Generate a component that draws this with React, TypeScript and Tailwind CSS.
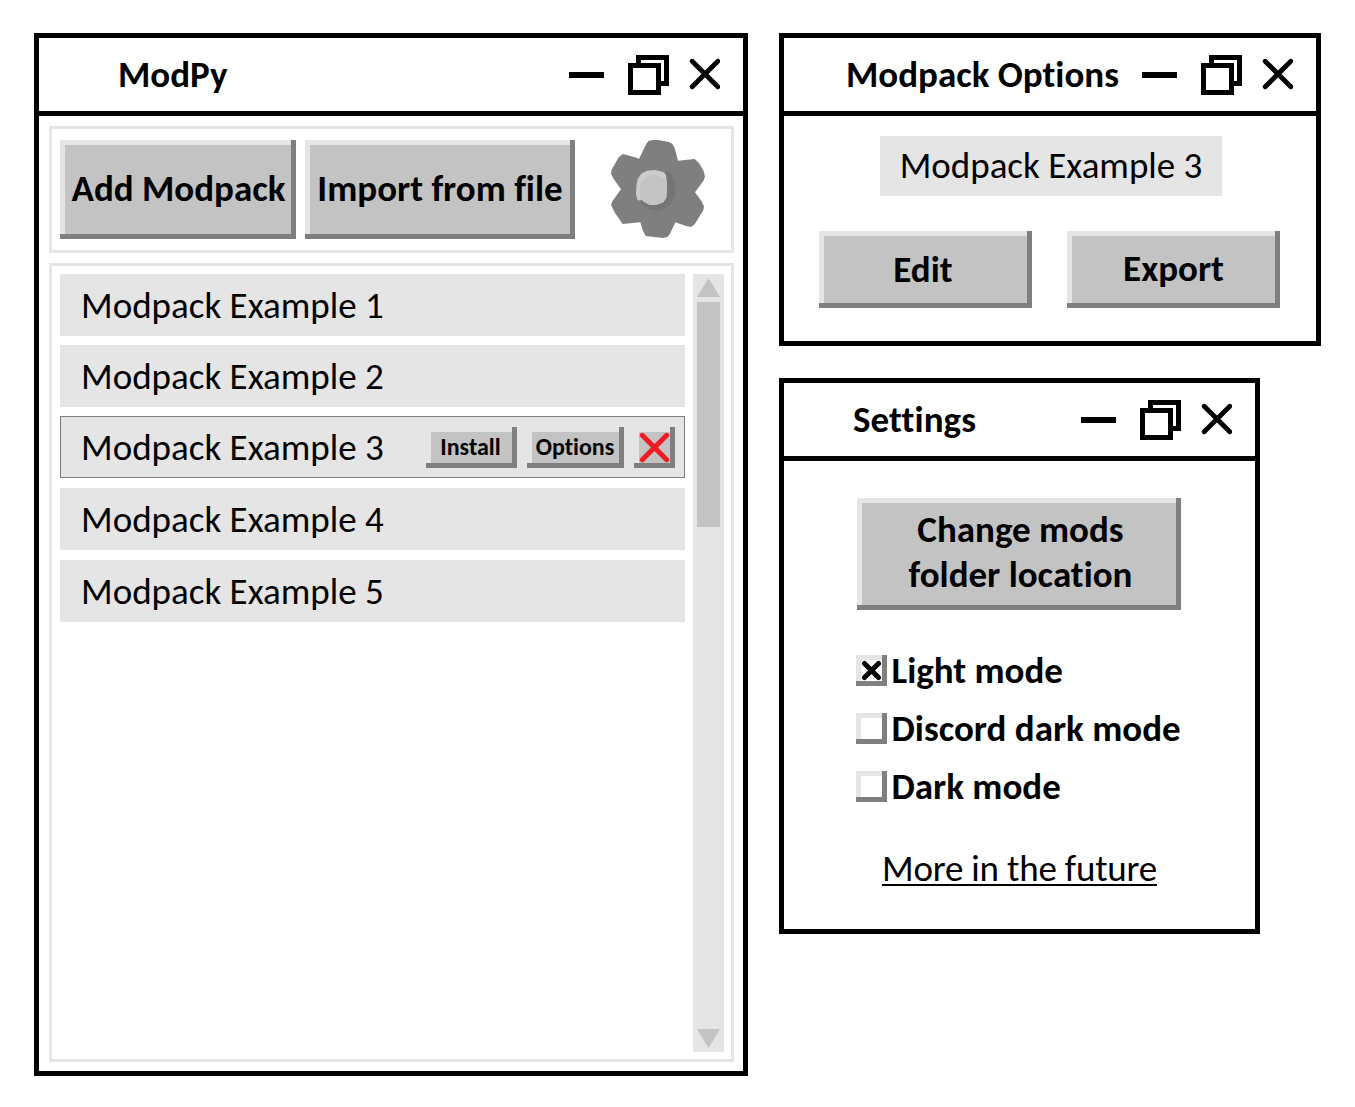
import type { ReactNode } from "react";

function WindowControls() {
  return (
    <svg width="151" height="40" viewBox="0 0 151 40" className="ml-auto shrink-0" fill="none" stroke="#000">
      <path d="M0 20H35" strokeWidth="6" shapeRendering="crispEdges" />
      <g strokeWidth="5" strokeLinejoin="miter" shapeRendering="crispEdges">
        <path d="M69.500 10V2.500H97.500V28.500H90" />
        <rect x="61.500" y="10.500" width="28" height="27" fill="#fff" />
      </g>
      <path d="M123.200 6.200L148.800 31.800M148.800 6.200L123.200 31.800" strokeWidth="4.800" strokeLinecap="round" />
    </svg>
  );
}

function Window({ title, className, titleClass, children }: { title: string; className: string; titleClass: string; children: ReactNode }) {
  return (
    <section className={`flex flex-col border-[5px] border-black bg-white ${className}`}>
      <header className={`flex h-[78px] shrink-0 items-center border-b-[5px] border-black pr-[23px] ${titleClass}`}>
        <h1 className="whitespace-nowrap font-bold">{title}</h1>
        <WindowControls />
      </header>
      {children}
    </section>
  );
}

function BevelButton({ className, children }: { className: string; children: ReactNode }) {
  return (
    <button
      className={`flex shrink-0 items-center justify-center whitespace-nowrap bg-[#c3c3c3] font-bold shadow-[inset_-5px_-5px_0_#7f7f7f,inset_5px_5px_0_#e5e5e5] ${className}`}
    >
      {children}
    </button>
  );
}

function Gear() {
  return (
    <svg width="94" height="98" viewBox="48 45 282 294" className="shrink-0">
      <path
        fill="#7f7f7f"
        d="M132 102L152 60L160 48L172 45L190 45L222 51L232 56L239 70L249 107L299 102L312 114L326 138L330 155L325 168L300 202L319 228L327 244L325 256L299 298L288 306L271 302L241 292L225 326L218 335L205 339L152 333L143 315L136 292L83 297L60 264L48 240L52 229L78 193L56 162L48 146L50 134L71 97L84 87L125 98Z"
      />
      <path fill="#757575" d="M213 136L226 143L235 158L240 177L240 211L228 236L208 252L185 258L160 252L143 240L134 228L175 235L212 215Z" />
      <path fill="#cccccc" d="M180 135L205 141L213 149L216 180L214 218L205 232L185 239L165 240L146 230L139 223L135 227L127 224L123 208L124 183L128 162L139 146L155 137Z" />
      <path fill="#c3c3c3" d="M175 149L193 153L207 161L215 163L216 190L214 218L205 232L185 239L165 240L148 231L137 215L134 195L138 174L150 158Z" />
    </svg>
  );
}

function ModpackRow({ name, className, children }: { name: string; className: string; children?: ReactNode }) {
  return (
    <li className={`flex h-[62px] items-center bg-[#e5e5e5] ${className}`}>
      <span className="pt-px">{name}</span>
      {children}
    </li>
  );
}

function Scrollbar() {
  return (
    <div className="ml-2 flex h-[778px] w-[31px] flex-col items-center bg-[#e5e5e5] pt-1 pb-1">
      <svg width="23" height="19" viewBox="0 0 23 19">
        <path d="M11.500 0L23 19H0Z" fill="#c3c3c3" />
      </svg>
      <div className="mt-[5px] h-[225px] w-[23px] bg-[#c3c3c3]" />
      <svg width="23" height="19" viewBox="0 0 23 19" className="mt-auto">
        <path d="M0 0H23L11.500 19Z" fill="#c3c3c3" />
      </svg>
    </div>
  );
}

function Checkbox({ label, checked }: { label: string; checked?: boolean }) {
  return (
    <label className="flex h-[31px] items-center">
      <span className="flex size-[31px] shrink-0 items-center justify-center shadow-[inset_-5px_-5px_0_#7f7f7f,inset_5px_5px_0_#e5e5e5]">
        {checked && (
          <svg width="21" height="21" viewBox="0 0 21 21" stroke="#000" strokeWidth="5" strokeLinecap="round">
            <path d="M3.500 3.500L17.500 17.500M17.500 3.500L3.500 17.500" />
          </svg>
        )}
      </span>
      <span className="ml-[4.500px] whitespace-nowrap font-bold">{label}</span>
    </label>
  );
}

export default function App() {
  return (
    <main className="flex h-[1107px] w-[1355px] items-start gap-[31px] overflow-hidden bg-white pt-[33px] pl-[34px] font-['Carlito','Lato',sans-serif] text-[37px] leading-[45px] text-black [font-variant-ligatures:none]">
      <Window title="ModPy" className="h-[1043px] w-[714px]" titleClass="pl-[79px]">
        <div className="mt-[10px] mr-[9px] ml-[10px] flex h-[127px] border-[3px] border-[#e5e5e5] pt-[11px] pl-2">
          <BevelButton className="h-[99px] w-[236px] pb-[2px] pl-px">Add Modpack</BevelButton>
          <BevelButton className="ml-[9px] h-[99px] w-[270px] pb-[2px]">Import from file</BevelButton>
          <button className="ml-9 flex h-[98px]">
            <Gear />
          </button>
        </div>
        <div className="mt-[10px] mr-[9px] ml-[10px] flex h-[799px] items-start border-[3px] border-[#e5e5e5] pt-2 pl-2">
          <ul className="w-[625px]">
            <ModpackRow name="Modpack Example 1" className="pl-[21px]" />
            <ModpackRow name="Modpack Example 2" className="mt-[9px] pl-[21px]" />
            <ModpackRow name="Modpack Example 3" className="mt-[9px] border border-[#7f7f7f] pr-[9px] pl-5">
              <div className="ml-auto flex text-[24px] leading-[30px]">
                <BevelButton className="h-[41px] w-[91px] pr-[2px]">Install</BevelButton>
                <BevelButton className="ml-[10px] h-[41px] w-[97px] pr-px">Options</BevelButton>
                <BevelButton className="ml-[10px] h-[41px] w-[41px]">
                  <svg width="31" height="31" viewBox="0 0 31 31" stroke="#ed1c24" strokeWidth="5" strokeLinecap="round">
                    <path d="M3.300 3.300L27.700 27.700M27.700 3.300L3.300 27.700" />
                  </svg>
                </BevelButton>
              </div>
            </ModpackRow>
            <ModpackRow name="Modpack Example 4" className="mt-[10px] pl-[21px]" />
            <ModpackRow name="Modpack Example 5" className="mt-[10px] pl-[21px]" />
          </ul>
          <Scrollbar />
        </div>
      </Window>

      <div className="flex flex-col items-start gap-8">
        <Window title="Modpack Options" className="h-[313px] w-[542px]" titleClass="pl-[62px]">
          <div className="mt-5 ml-24 flex h-[60px] w-[342px] items-center justify-center bg-[#e5e5e5] pb-px">Modpack Example 3</div>
          <div className="mt-[35px] ml-[35px] flex gap-[35px]">
            <BevelButton className="h-[77px] w-[213px] pr-[5px] pb-px">Edit</BevelButton>
            <BevelButton className="h-[77px] w-[213px] pb-[3px]">Export</BevelButton>
          </div>
        </Window>

        <Window title="Settings" className="h-[556px] w-[481px]" titleClass="pl-[69px] tracking-[0.1px]">
          <BevelButton className="mt-[37px] ml-[73px] h-[112px] w-[324px] pb-[5px] pl-[3px]">
            <span>
              Change mods
              <br />
              folder location
            </span>
          </BevelButton>
          <div className="mt-[45px] ml-[72px] flex flex-col gap-[27px]">
            <Checkbox label="Light mode" checked />
            <Checkbox label="Discord dark mode" />
            <Checkbox label="Dark mode" />
          </div>
          <p className="mt-[43px] ml-[98px] h-[41px] w-[275px] whitespace-nowrap border-b-2 border-black pt-px tracking-[-0.2px]">More in the future</p>
        </Window>
      </div>
    </main>
  );
}
